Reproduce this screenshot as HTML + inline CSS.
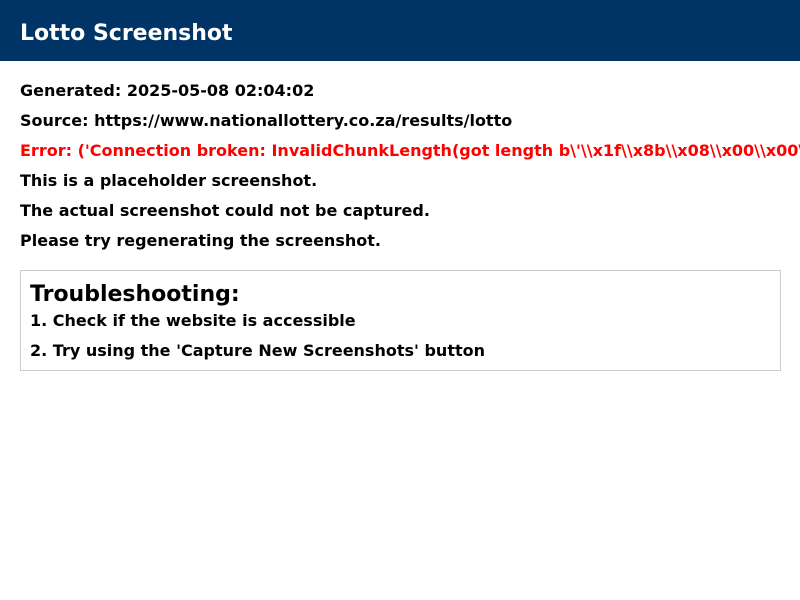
<!DOCTYPE html>
<html><head><meta charset="utf-8"><style>
html,body{margin:0;padding:0;width:800px;height:600px;overflow:hidden;background:#fff;font-family:"DejaVu Sans",sans-serif;font-weight:bold;}
.h{position:absolute;left:0;top:0;width:800px;height:61px;background:#003366;}
.h span{position:absolute;left:20px;top:20px;color:#fff;font-size:22px;line-height:28px;white-space:nowrap;}
.l{position:absolute;left:20px;font-size:16px;line-height:20px;white-space:nowrap;color:#000;}
.box{position:absolute;left:20px;top:270px;width:759px;height:99px;border:1px solid #ccc;}
.t{position:absolute;left:30px;top:281px;font-size:22px;line-height:28px;}
</style></head><body>
<div class="h"><span>Lotto Screenshot</span></div>
<div class="l" style="top:81px">Generated: 2025-05-08 02:04:02</div>
<div class="l" style="top:111px">Source: https://www.nationallottery.co.za/results/lotto</div>
<div class="l" style="top:141px;color:#f00;width:780px;overflow:hidden">Error: ('Connection broken: InvalidChunkLength(got length b\'\\x1f\\x8b\\x08\\x00\\x00\\x00\\x00</div>
<div class="l" style="top:171px">This is a placeholder screenshot.</div>
<div class="l" style="top:201px">The actual screenshot could not be captured.</div>
<div class="l" style="top:231px">Please try regenerating the screenshot.</div>
<div class="box"></div>
<div class="t">Troubleshooting:</div>
<div class="l" style="top:311px;left:30px">1. Check if the website is accessible</div>
<div class="l" style="top:341px;left:30px">2. Try using the 'Capture New Screenshots' button</div>
</body></html>
